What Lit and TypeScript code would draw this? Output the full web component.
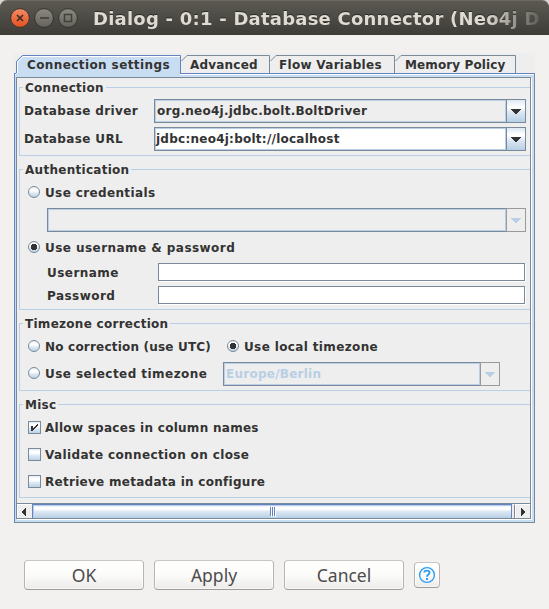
import { LitElement, html, css, svg, nothing } from "lit";
import { customElement, property } from "lit/decorators.js";
import { classMap } from "lit/directives/class-map.js";

@customElement("metal-combo")
class MetalCombo extends LitElement {
  static styles = css`
    :host { display: block; height: 24px; box-sizing: border-box; letter-spacing: 0.25px; }
    .box { display: flex; height: 24px; box-sizing: border-box; }
    .field {
      flex: 1; box-sizing: border-box; border: 1px solid #7a8a99; border-right: 0;
      box-shadow: inset 0 0 0 1px #b8cfe5; padding-left: 2px;
      line-height: 22px; white-space: pre; overflow: hidden;
    }
    .editable .field { background: #fff; padding-left: 1px; }
    .arrow {
      width: 20px; box-sizing: border-box; border: 1px solid #7a8a99;
      background: linear-gradient(#dde8f3 0%, #fff 30%, #fff 36%, #dde8f3 55%, #b8cfe5 100%);
    }
    .disabled .field { color: #b8cfe5; }
    .disabled .arrow { border-color: #999; background: #eee; }
    svg { display: block; margin: 9px 0 0 4px; }
  `;
  @property() value = "";
  @property({ type: Boolean }) disabled = false;
  @property({ type: Boolean }) editable = false;
  render() {
    return html`<div class=${classMap({ box: true, disabled: this.disabled, editable: this.editable })}>
      <div class="field">${this.value}</div>
      <div class="arrow"><svg width="10" height="5" shape-rendering="crispEdges"><path d="M0 0H10V1H9V2H8V3H7V4H6V5H4V4H3V3H2V2H1V1H0Z" fill=${this.disabled ? "#b8cfe5" : "#333"} /></svg></div>
    </div>`;
  }
}

@customElement("metal-option")
class MetalOption extends LitElement {
  static styles = css`
    :host { display: flex; align-items: center; height: 14px; white-space: pre; }
    svg { display: block; flex: none; }
    .text { padding-top: 2px; }
    .radio { margin-right: 5px; }
    .check { margin-right: 4px; }
  `;
  @property() kind = "radio";
  @property({ type: Boolean }) checked = false;
  render() {
    const grad = svg`<defs><linearGradient id="g" x1="0" y1="0" x2="0" y2="1">
      <stop offset="0" stop-color="#dde8f3"/><stop offset=".25" stop-color="#fff"/><stop offset=".4" stop-color="#fff"/>
      <stop offset=".6" stop-color="#dde8f3"/><stop offset="1" stop-color="#b8cfe5"/></linearGradient></defs>`;
    return this.kind === "radio"
      ? html`<svg class="radio" width="12" height="12">${grad}
          <circle cx="6" cy="6" r="5.5" fill="url(#g)" stroke="#7a8a99"/>
          ${this.checked ? svg`<path d="M4 3H8V4H9V8H8V9H4V8H3V4H4Z" fill="#333" shape-rendering="crispEdges"/>` : nothing}
        </svg><span class="text"><slot></slot></span>`
      : html`<svg class="check" width="13" height="13">${grad}
          <rect x=".5" y=".5" width="12" height="12" fill="url(#g)" stroke="#7a8a99"/>
          ${this.checked ? svg`<path d="M3 5H5V7H6V6H7V5H8V4H9V3H10V5H9V6H8V7H7V8H6V9H5V10H3Z" fill="#333" shape-rendering="crispEdges"/>` : nothing}
        </svg><span class="text"><slot></slot></span>`;
  }
}

@customElement("app-root")
class AppRoot extends LitElement {
  static styles = css`
    :host {
      display: block; width: 549px; height: 609px; overflow: hidden; background: #f2f1f0;
      font: bold 12px/14px "DejaVu Sans", sans-serif; color: #333; letter-spacing: 0.28px;
    }
    .title {
      height: 35px; box-sizing: border-box; display: flex; align-items: center; padding: 0 8px 0 10px;
      background: linear-gradient(#5b5952, #3d3c37); border-top: 1px solid #6b6962; border-radius: 7px 7px 0 0;
    }
    .corners { background: #d8d5d2; height: 35px; }
    .dots { display: flex; gap: 4px; flex: none; }
    .dots svg { display: block; }
    .caption {
      margin-left: 15px; font-size: 18px; letter-spacing: 0.23px; line-height: 24px; color: #dfdbd2; white-space: pre; flex: 1; overflow: hidden;
      text-shadow: 0 -1px 0 #2b2a26; padding-top: 1px;
      -webkit-mask-image: linear-gradient(90deg, #000 392px, transparent 456px);
      mask-image: linear-gradient(90deg, #000 392px, transparent 456px);
    }
    .pane { margin: 18px 14px 0; width: 521px; background: #eee; }
    .tabs { display: grid; grid-template-columns: 167px 89px 125px 121px; height: 20px; position: relative; white-space: pre; }
    .tabs span { line-height: 14px; padding-top: 5px; height: 14px; position: relative; }
    .tabs svg { position: absolute; left: 0; top: 0; }
    .tabs .t1 { padding-left: 13px; letter-spacing: 0.4px; }
    .tabs .t2 { padding-left: 9px; letter-spacing: 0.2px; }
    .tabs .t3 { padding-left: 9px; letter-spacing: 0.3px; }
    .tabs .t4 { padding-left: 10px; letter-spacing: 0.12px; }
    .frame {
      height: 450px; box-sizing: border-box; background: #c8ddf2; padding: 3px 2px 2px 1px;
      border: 1px solid #7a8a99; border-top-color: #6382bf; border-left-color: #6382bf;
      box-shadow: inset 0 1px 0 #fff;
    }
    .view {
      height: 442px; box-sizing: border-box; background: #eee; border: 1px solid #7a8a99;
      box-shadow: 1px 1px 0 #fff; display: flex; flex-direction: column; width: 515px;
    }
    .groups { flex: 1; min-height: 0; overflow: hidden; padding: 9px 0 0 2px; box-sizing: border-box; }
    .group { box-sizing: border-box; width: 530px; border: 1px solid #b8cfe5; margin-bottom: 13px; }
    .legend { display: block; width: max-content; height: 14px; margin: -7px 0 -1px 3px; padding: 0 2px; background: #eee; white-space: pre; }
    .g1 { height: 69px; } .g2 { height: 141px; } .g3 { height: 68px; } .g4 { height: 94px; }
    .row { display: flex; align-items: center; height: 24px; padding-left: 4px; white-space: pre; }
    .row .name { width: 130px; letter-spacing: 0.36px; }
    .wide { width: 372px; }
    .gap5 { margin-top: 5px; } .gap4 { margin-top: 4px; }
    .opt { padding-left: 8px; height: 14px; }
    .opt.a { margin-top: 9px; }
    .cred { margin: 9px 0 0 27px; width: 479px; }
    .opt.b { margin-top: 8px; }
    .s2 { letter-spacing: 0.2px; } .s4 { letter-spacing: 0.37px; } .s45 { letter-spacing: 0.45px; }
    .entry { display: flex; height: 19px; margin: 4px 0 0 27px; align-items: center; }
    .entry.first { margin-top: 8px; }
    .entry .name { width: 111px; padding-top: 2px; letter-spacing: 0.46px; }
    .input { box-sizing: border-box; width: 367px; height: 18px; background: #fff; border: 1px solid #7a8a99; box-shadow: 1px 1px 0 #fff; }
    .tzname { width: 195px; margin-top: -2px; }
    .utc { width: 199px; }
    .tz { width: 277px; }
    .sel { height: 24px; padding-left: 8px; margin-top: 9px; }
    .opt.m1 { margin-top: 9px; }
    .opt.m { margin-top: 13px; }
    .scroll { height: 15px; flex: none; display: flex; box-sizing: border-box; border-top: 1px solid #7a8a99; }
    .cap { width: 15px; box-sizing: border-box; display: flex; align-items: center; border: 1px solid #fff; border-right-color: #eee; border-bottom: 0; background: #eee; }
    .cap.l { padding-left: 3px; }
    .cap.r { width: 16px; margin-left: 2px; border-left: 1px solid #7a8a99; box-shadow: inset 1px 0 #fff; padding-left: 6px; border-right: 0; }
    .thumb {
      flex: 1; border: 1px solid #6382bf; border-bottom: 0; box-shadow: inset 1px 1px 0 #b8cfe5;
      background: linear-gradient(#dde8f3 0%, #fff 20%, #fff 32%, #dde8f3 50%, #b8cfe5 100%);
      display: flex; align-items: center; justify-content: center;
    }
    .thumb svg { margin-left: 2px; }
    .actions { display: flex; align-items: center; gap: 10px; margin: 37px 0 0 24px; height: 30px; }
    .btn {
      box-sizing: border-box; width: 120px; height: 30px; border: 1px solid #b6b0aa; border-color: #cbc5c0 #b9b4b0 #9f9a96;
      border-radius: 4px; background: linear-gradient(#fff, #fbfbfa 50%, #ecebe9); box-shadow: inset 0 0 0 1px #ffffff99;
      font: 17.5px/28px "Noto Sans", sans-serif; letter-spacing: 0; color: #4c4c4c; text-align: center;
    }
    .help { width: 26px; height: 26px; display: grid; place-items: center; }
    .help svg { display: block; }
  `;
  render() {
    return html`
      <div class="corners"><div class="title">
        <div class="dots">
          <svg width="20" height="22"><defs><linearGradient id="r" x2="0" y2="1"><stop stop-color="#f58b66"/><stop offset="1" stop-color="#e2501d"/></linearGradient>
            <linearGradient id="k" x2="0" y2="1"><stop stop-color="#8b8982"/><stop offset="1" stop-color="#64625b"/></linearGradient></defs>
            <circle cx="10" cy="11" r="9.4" fill="url(#r)" stroke="#35332e"/><path d="M7 8L13 14M13 8L7 14" stroke="#3b2c24" stroke-width="1.7"/></svg>
          <svg width="20" height="22"><circle cx="10" cy="11" r="9.4" fill="url(#k)" stroke="#35332e"/><path d="M6 11H15" stroke="#42403a" stroke-width="1.7"/></svg>
          <svg width="20" height="22"><circle cx="10" cy="11" r="9.4" fill="url(#k)" stroke="#35332e"/><rect x="6.5" y="7.5" width="7" height="7" fill="none" stroke="#42403a" stroke-width="1.5"/></svg>
        </div>
        <div class="caption">Dialog - 0:1 - Database Connector (Neo4j D</div>
      </div></div>
      <div class="pane">
        <div class="tabs">
          <svg width="521" height="24">
            <path d="M2 24V8L8 2H166V24Z" fill="#c8ddf2"/>
            <path d="M3.5 20V9L9 3.5H166" fill="none" stroke="#fff"/>
            <path d="M2.5 20V8.5L8.5 2.5H166.5V20" fill="none" stroke="#6382bf"/>
            <path d="M167.5 8L173 2.5H255.5V20M256.500 8L262 2.5H380.5V20M381.500 8L387 2.5H501.500V20" fill="none" stroke="#7a8a99"/>
          </svg>
          <span class="t1">Connection settings</span><span class="t2">Advanced</span><span class="t3">Flow Variables</span><span class="t4">Memory Policy</span>
        </div>
        <div class="frame"><div class="view">
          <div class="groups">
            <div class="group g1"><span class="legend">Connection</span>
              <div class="row gap5"><span class="name">Database driver</span><metal-combo class="wide" value="org.neo4j.jdbc.bolt.BoltDriver"></metal-combo></div>
              <div class="row gap4"><span class="name">Database URL</span><metal-combo class="wide" editable value="jdbc:neo4j:bolt://localhost"></metal-combo></div>
            </div>
            <div class="group g2"><span class="legend">Authentication</span>
              <div class="row opt a"><metal-option class="s4">Use credentials</metal-option></div>
              <metal-combo class="cred" disabled></metal-combo>
              <div class="row opt b"><metal-option class="s45" checked>Use username &amp; password</metal-option></div>
              <div class="entry first"><span class="name">Username</span><div class="input"></div></div>
              <div class="entry"><span class="name">Password</span><div class="input"></div></div>
            </div>
            <div class="group g3"><span class="legend">Timezone correction</span>
              <div class="row opt a"><metal-option class="utc s2">No correction (use UTC)</metal-option><metal-option class="s4" checked>Use local timezone</metal-option></div>
              <div class="row sel"><metal-option class="tzname s45">Use selected timezone</metal-option><metal-combo class="tz" disabled value="Europe/Berlin"></metal-combo></div>
            </div>
            <div class="group g4"><span class="legend">Misc</span>
              <div class="row opt m1"><metal-option kind="check" checked>Allow spaces in column names</metal-option></div>
              <div class="row opt m"><metal-option kind="check" class="s4">Validate connection on close</metal-option></div>
              <div class="row opt m"><metal-option kind="check">Retrieve metadata in configure</metal-option></div>
            </div>
          </div>
          <div class="scroll">
            <div class="cap l"><svg width="5" height="8" shape-rendering="crispEdges"><path d="M4 0H5V8H4V7H3V6H2V5H1V3H2V2H3V1H4Z" fill="#333"/></svg></div>
            <div class="thumb"><svg width="7" height="10" shape-rendering="crispEdges"><path d="M1 1H2V10H1ZM3 1H4V10H3ZM5 1H6V10H5Z" fill="#fff"/><path d="M0 0H1V9H0ZM2 0H3V9H2ZM4 0H5V9H4Z" fill="#6382bf"/></svg></div>
            <div class="cap r"><svg width="5" height="8" shape-rendering="crispEdges"><path d="M0 0H1V1H2V2H3V3H4V5H3V6H2V7H1V8H0Z" fill="#333"/></svg></div>
          </div>
        </div></div>
      </div>
      <div class="actions">
        <div class="btn">OK</div><div class="btn">Apply</div><div class="btn">Cancel</div>
        <div class="btn help"><svg width="18" height="18" fill="none" stroke="#2f9df4"><circle cx="9" cy="9" r="7.4" stroke-width="1.4"/><path d="M6.300 6.500C6.300 4 11.500 3.800 11.500 6.700C11.500 8.600 9 8.500 9 10.800" stroke-width="1.9"/><path d="M9 12V14" stroke-width="2"/></svg></div>
      </div>`;
  }
}
